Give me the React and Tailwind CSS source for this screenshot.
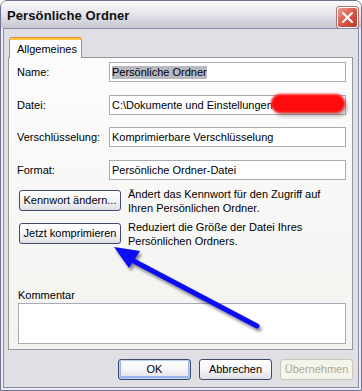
import React from 'react';

const btnBase =
  "h-[21px] rounded-[3px] border text-[11px] flex items-center justify-center leading-none";
const btnNormal =
  btnBase + " border-[#3e4a70] bg-linear-to-b from-white via-[#f6f6f8] to-[#dedee6] text-black";

const Field = ({ label, children, className }) => (
  <div className={"flex items-center pl-[8px] pr-[6px] " + className}>
    <span className="flex-1 text-[11px] text-black">{label}</span>
    <div className="w-[237px] h-[20px] border border-[#a5acb5] bg-white flex items-center pl-[2px] text-[11px] text-black whitespace-nowrap overflow-hidden">
      {children}
    </div>
  </div>
);

const ActionRow = ({ label, lines, className }) => (
  <div className={"h-[21px] flex items-center pl-[10px] " + className}>
    <div className={btnNormal + " w-[102px] shrink-0"}>{label}</div>
    <div className="ml-[7px] text-[11px] leading-[14px] text-black whitespace-nowrap">
      {lines.map((l) => (
        <div key={l}>{l}</div>
      ))}
    </div>
  </div>
);

export default function App() {
  return (
    <div className="relative w-[362px] h-[391px] bg-white font-['Liberation_Sans',Arial,sans-serif]">
      <div className="w-[362px] h-[391px] flex flex-col rounded-t-[7px] border border-[#707090] overflow-hidden">
        {/* title bar */}
        <div className="h-[27px] shrink-0 flex items-center justify-between pl-[6px] pr-[3px] bg-linear-to-b from-[#fcfcfd] via-[#e4e4ea] to-[#c6c6d2]">
          <span className="pt-[3px] text-[13px] font-bold text-[#111] tracking-[0.1px]">Persönliche Ordner</span>
          <div className="mt-[5px] w-[21px] h-[21px] rounded-[3px] border border-white bg-linear-to-br from-[#ee9a8c] via-[#d9584a] to-[#b93a2c] flex items-center justify-center shadow-[0_0_0_1px_#b07070]">
            <svg width="11" height="11" viewBox="0 0 11 11">
              <path d="M1 1 L10 10 M10 1 L1 10" stroke="white" strokeWidth="2" strokeLinecap="square" />
            </svg>
          </div>
        </div>

        {/* frame */}
        <div className="flex-1 flex flex-col bg-[#ececf2] px-[2px] pb-[2px]">
          <div className="flex-1 flex flex-col border border-[#8a8aa6] bg-[#e0dfe3] pl-[4px] pr-[5px] pt-[8px]">
            {/* tab */}
            <div className="flex">
              <div className="ml-[1px] w-[73px] h-[21px] -mb-[1px] relative z-10 rounded-t-[3px] border-x border-t border-[#e68b2c] bg-[#fcfcfd] flex flex-col overflow-hidden">
                <div className="h-[2px] bg-[#ffc73c] shrink-0" />
                <div className="flex-1 flex items-center pl-[6px] text-[11px] text-black border-x border-[#fcfcfd]">
                  Allgemeines
                </div>
              </div>
            </div>

            {/* panel */}
            <div className="h-[293px] shrink-0 border border-[#919b9c] bg-linear-to-b from-[#fcfcfc] to-[#f2f2ef] pt-[4px]">
              <Field label="Name:">
                <span className="bg-[#b8b8c0] leading-[13px]">Persönliche Ordner</span>
              </Field>
              <Field label="Datei:" className="mt-[13px]">
                C:\Dokumente und Einstellungen\
              </Field>
              <Field label="Verschlüsselung:" className="mt-[12px]">
                Komprimierbare Verschlüsselung
              </Field>
              <Field label="Format:" className="mt-[13px]">
                Persönliche Ordner-Datei
              </Field>

              <ActionRow
                className="mt-[10px]"
                label="Kennwort ändern..."
                lines={["Ändert das Kennwort für den Zugriff auf", "Ihren Persönlichen Ordner."]}
              />
              <ActionRow
                className="mt-[12px]"
                label="Jetzt komprimieren"
                lines={["Reduziert die Größe der Datei Ihres", "Persönlichen Ordners."]}
              />

              <div className="mt-[45px] ml-[9px] mr-[6px]">
                <div className="h-[13px] leading-[13px] text-[11px] text-black">Kommentar</div>
                <div className="mt-[1px] h-[41px] border border-[#a5acb5] bg-white" />
              </div>
            </div>

            {/* bottom buttons */}
            <div className="mt-[9px] flex justify-end gap-[8px]">
              <div className={btnNormal + " w-[73px] shadow-[inset_0_0_0_1px_#b8d0f4,inset_0_-1px_0_2px_#9ab5e6]"}>OK</div>
              <div className={btnNormal + " w-[73px]"}>Abbrechen</div>
              <div className={btnBase + " w-[73px] border-[#c9c7ba] bg-[#f5f4ea] text-[#aca899]"}>Übernehmen</div>
            </div>
          </div>
        </div>
      </div>

      {/* annotations drawn over the screenshot */}
      <svg className="absolute left-0 top-0 pointer-events-none" width="362" height="391">
        <defs>
          <filter id="sh" x="-20%" y="-20%" width="140%" height="140%">
            <feDropShadow dx="2" dy="3" stdDeviation="1.5" floodColor="#000" floodOpacity="0.45" />
          </filter>
          <filter id="blur" x="-20%" y="-60%" width="140%" height="220%">
            <feGaussianBlur stdDeviation="1.3" />
          </filter>
          <filter id="blur2" x="-20%" y="-60%" width="140%" height="220%">
            <feGaussianBlur stdDeviation="2" />
          </filter>
        </defs>
        <g filter="url(#sh)">
          <line x1="257" y1="326" x2="128" y2="258" stroke="#0a0af4" strokeWidth="5" strokeLinecap="round" />
          <polygon points="114,247 140,251 129,268" fill="#0a0af4" />
        </g>
        <rect x="275" y="99" width="72" height="17" rx="8" fill="#555" opacity="0.45" filter="url(#blur2)" />
        <rect x="271" y="94" width="74" height="19" rx="9" fill="#ff0a0a" filter="url(#blur)" />
      </svg>
    </div>
  );
}
